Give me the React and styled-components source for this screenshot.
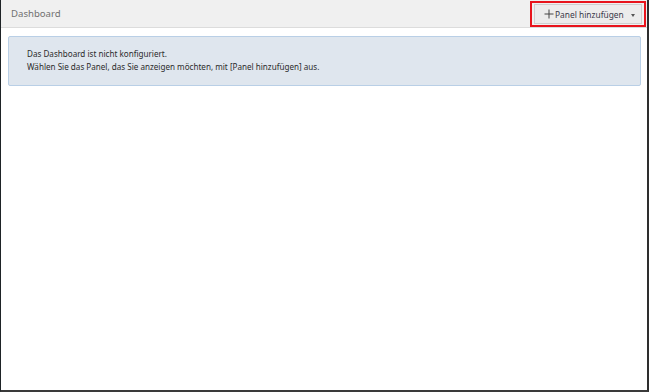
import React from "react"
import styled, { createGlobalStyle } from 'styled-components'

const Global = createGlobalStyle`
  html, body { margin:0; padding:0; background:#fff; }
  body { font-family: "Noto Sans", "Open Sans", sans-serif; }
`

function App(){
  return(
    <>
      <Global />
      <Frame>
        <Header>
          <Title>Dashboard</Title>
          <Highlight>
            <AddButton>
              <svg width="10" height="10" viewBox="0 0 10 10">
                <path d="M5 0.5V9.5M0.5 5H9.5" stroke="#444" strokeWidth="1" fill="none" />
              </svg>
              <span>Panel hinzufügen</span>
              <Caret />
            </AddButton>
          </Highlight>
        </Header>
        <Body>
          <Info>
            <p>Das Dashboard ist nicht konfiguriert.</p>
            <p>Wählen Sie das Panel, das Sie anzeigen möchten, mit [Panel hinzufügen] aus.</p>
          </Info>
        </Body>
      </Frame>
    </>
  )
}

const Frame = styled.div`
  box-sizing:border-box;
  width:649px;
  height:392px;
  display:flex;
  flex-direction:column;
  border-left:1px solid #1e2326;
  border-right:2px solid #2e2e2e;
  border-bottom:2px solid #3a3a3a;
  background:#fff;
`
const Header = styled.header`
  box-sizing:border-box;
  height:28px;
  display:flex;
  align-items:center;
  justify-content:space-between;
  padding:0 1px 0 10px;
  background:#f0f0f0;
  border-bottom:1px solid #dcdcdc;
`
const Title = styled.div`
  font-size:9.6px;
  color:#707070;
`
const Highlight = styled.div`
  box-sizing:border-box;
  width:116px;
  height:26px;
  margin-top:1px;
  padding:2px;
  border:2px solid #e8141c;
  display:flex;
  align-items:center;
`
const AddButton = styled.div`
  box-sizing:border-box;
  flex:1;
  height:20px;
  display:flex;
  align-items:center;
  gap:1px;
  padding:0 6px 0 9px;
  background:#ececec;
  border:1px solid #cfcfcf;
  font-size:8.4px;
  color:#3a3a4a;
  white-space:nowrap;
  svg{ display:block; }
  span{ flex:1; }
`
const Caret = styled.i`
  width:0;
  height:0;
  border-left:2.5px solid transparent;
  border-right:2.5px solid transparent;
  border-top:3px solid #555;
  margin-top:2px;
`
const Body = styled.main`
  flex:1;
  padding:8px 6px 0 7px;
`
const Info = styled.div`
  box-sizing:border-box;
  height:50px;
  padding:11px 18px;
  background:#dfe6ee;
  border:1px solid #b9cfe6;
  border-radius:2px;
  font-size:8.1px;
  line-height:12.5px;
  color:#2c2c2c;
  p{ margin:0; }
`

export default App
